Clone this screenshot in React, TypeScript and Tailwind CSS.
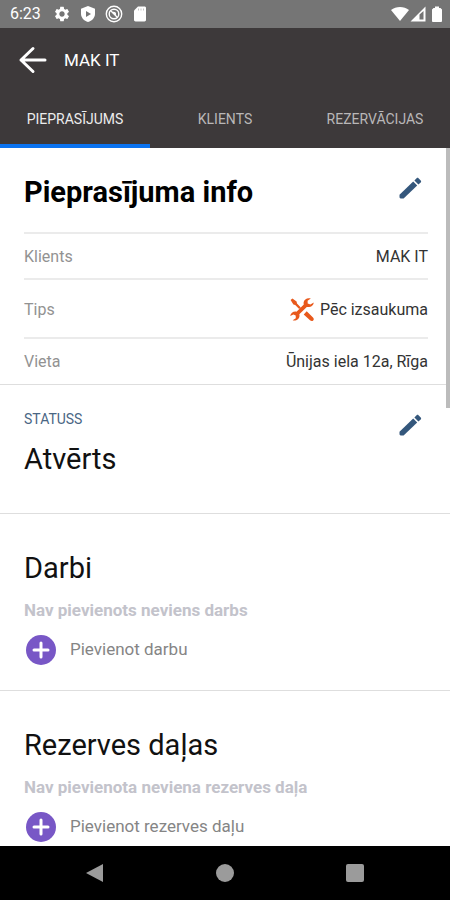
import React from 'react';
import { MdSettings } from 'react-icons/md';

interface InfoRow {
  label: string;
  value: string;
  tall?: boolean;
  icon?: React.ReactNode;
}

interface PartSection {
  title: string;
  empty: string;
  action: string;
}

const ToolsIcon = () => (
  <svg viewBox="0 0 24 24" className="w-6 h-6" fill="#e8591c" aria-hidden="true">
    <path d="M.6 2 2.4.4l4.200 3.200.4 2 3.800 3.900-1.600 1.600-4-4-1.800-.6z" />
    <path d="m13.700 16.400 3-3.100 6.300 6.100c1.100 1.200 1 2.200.2 3-.9 1-2.100.9-3.200-.1z" />
    <path d="M23.700 4.400 20.400 6.600 17.700 5.400 17.600 2.800 20.800.5C17.600-.6 13.900 1.200 13.600 4.500c0 .8 0 1.300.2 1.900L6.500 13.700C3.400 13.100.6 15.200.200 18.100l3.200-1.700 2.300 1.200.100 2.600-3.100 2.100c3.200 1 6.800-1 6.800-4.600 0-.6 0-1-.2-1.500l7.500-7.300c3.500.8 6.700-1.300 6.900-4.500z" />
  </svg>
);

const PencilIcon = () => (
  <svg viewBox="0 0 24 24" className="w-6 h-6" fill="#34577c" aria-hidden="true">
    <path d="M1.500 18.800 15.200 5.600l4 4L5.600 22.600H2.500l-1-1z" />
    <path d="m16.400 4.400 2.200-2.100c.6-.6 1.300-.6 1.900 0l2.200 2.200c.6.6.6 1.300 0 1.900l-2.300 2.100z" />
  </svg>
);

const infoRows: InfoRow[] = [
  { label: 'Klients', value: 'MAK IT' },
  { label: 'Tips', value: 'Pēc izsaukuma', tall: true, icon: <ToolsIcon /> },
  { label: 'Vieta', value: 'Ūnijas iela 12a, Rīga' },
];

const tabs = ['Pieprasījums', 'Klients', 'Rezervācijas'];

const partSections: PartSection[] = [
  { title: 'Darbi', empty: 'Nav pievienots neviens darbs', action: 'Pievienot darbu' },
  { title: 'Rezerves daļas', empty: 'Nav pievienota neviena rezerves daļa', action: 'Pievienot rezerves daļu' },
];

const StatusBar = () => (
  <div className="h-7 shrink-0 bg-[#757575] text-white flex items-center justify-between pl-2.5 pr-2">
    <div className="flex items-center gap-2">
      <span className="text-base mr-1">6:23</span>
      <MdSettings className="w-[18px] h-[18px]" />
      <svg viewBox="0 0 16 16" className="w-[18px] h-4" aria-hidden="true">
        <path fill="#fff" d="M8 0l7 2.700v5c0 4-3 7.200-7 8.300-4-1.100-7-4.300-7-8.300v-5z" />
        <path fill="#757575" d="M6 5l5 3-5 3z" />
      </svg>
      <svg viewBox="0 0 18 18" className="w-[18px] h-[18px]" fill="none" stroke="#fff" strokeWidth="1.400" aria-hidden="true">
        <circle cx="9" cy="9" r="7.700" />
        <circle cx="9" cy="9" r="4.800" />
        <path d="M5.500 5.500l7 7M8 7.500c1.600-.4 2.600.6 2.400 2.200" />
      </svg>
      <svg viewBox="0 0 16 16" className="w-[18px] h-4" aria-hidden="true">
        <path fill="#fff" d="M6 .5h6.500c.8 0 1.500.6 1.500 1.400v12.200c0 .8-.7 1.400-1.500 1.400h-9c-.8 0-1.500-.6-1.500-1.400V4.500z" />
        <path stroke="#c4c4c4" d="M6.500 2.500v2M9 2.500v2M11.500 2.500v2" />
      </svg>
    </div>
    <div className="flex items-center">
      <svg viewBox="0 0 18 16" className="w-[18px] h-4 mr-px" fill="#fff" aria-hidden="true">
        <path d="M0 4C5 0 13 0 18 4L9 15z" />
      </svg>
      <svg viewBox="0 0 16 16" className="w-4 h-4 mr-1.5" aria-hidden="true">
        <path fill="#fff" fillRule="evenodd" d="M15.500.5v15H.5zM9.500 8.500v5h4V5z" />
      </svg>
      <svg viewBox="0 0 10 16" className="w-2.5 h-4" fill="#fff" aria-hidden="true">
        <path d="M3 .5h4V2h1.500L10 3.500V15c0 .5-.5 1-1 1H1c-.5 0-1-.5-1-1V3.500L1.500 2H3z" />
      </svg>
    </div>
  </div>
);

const Header = () => (
  <header className="shrink-0 bg-[#3d393a] text-white">
    <div className="h-16 flex items-center gap-4 px-[18px]">
      <button type="button" aria-label="Atpakaļ">
        <svg
          viewBox="0 0 30 30"
          className="w-[30px] h-[30px]"
          fill="none"
          stroke="#fff"
          strokeWidth="3"
          strokeLinecap="round"
          strokeLinejoin="round"
        >
          <path d="M27 15H3M15 3.500 3 15l12 11.500" />
        </svg>
      </button>
      <h1 className="text-[17px] pt-px">MAK IT</h1>
    </div>
    <nav className="grid grid-cols-3">
      {tabs.map((tab, index) => (
        <button
          key={tab}
          type="button"
          className={
            index === 0
              ? 'h-14 pt-px text-sm uppercase text-[#ececec] border-b-4 border-[#0b73f0]'
              : 'h-14 pt-px text-sm uppercase text-[#b9b7b8] border-b-4 border-transparent'
          }
        >
          {tab}
        </button>
      ))}
    </nav>
  </header>
);

const AddSection: React.FC<PartSection> = ({ title, empty, action }) => (
  <section className="px-6 pt-9 pb-6 border-b border-[#dedede]">
    <h2 className="text-[29px] leading-9 text-[#111]">{title}</h2>
    <p className="mt-3 text-[17px] leading-6 font-bold text-[#c3c3cb]">{empty}</p>
    <button type="button" className="mt-3 h-8 flex items-center gap-3 text-[17px] text-[#858585]">
      <svg viewBox="0 0 34 32" className="w-[34px] h-8" aria-hidden="true">
        <circle cx="17" cy="16" r="15" fill="#7857c6" />
        <path d="M17 9v14M10 16h14" stroke="#fff" strokeWidth="3" strokeLinecap="round" />
      </svg>
      {action}
    </button>
  </section>
);

export default function App() {
  return (
    <div className="h-screen flex flex-col overflow-hidden bg-white text-black font-['Roboto',sans-serif]">
      <StatusBar />
      <Header />
      <main className="relative flex-1 min-h-0 overflow-hidden">
        <section className="pt-6 pb-px border-b border-[#dedede]">
          <div className="pl-6 pr-[22px] flex justify-between">
            <h2 className="text-[29px] leading-10 font-bold">Pieprasījuma info</h2>
            <button type="button" aria-label="Labot info" className="self-start pt-1 pr-1.5">
              <PencilIcon />
            </button>
          </div>
          <dl className="ml-6 mr-[22px] mt-5">
            {infoRows.map((row) => (
              <div
                key={row.label}
                className={
                  row.tall
                    ? 'h-[59px] pt-0.5 flex items-center justify-between border-t-2 border-[#ebebeb]'
                    : 'h-[46px] pt-0.5 flex items-center justify-between border-t-2 border-[#ebebeb]'
                }
              >
                <dt className="text-base text-[#929292]">{row.label}</dt>
                <dd className="flex items-center gap-1.5 text-base text-[#333]">
                  {row.icon}
                  {row.value}
                </dd>
              </div>
            ))}
          </dl>
        </section>

        <section className="pl-6 pr-[22px] pt-6 pb-9 flex justify-between border-b border-[#dedede]">
          <div>
            <h3 className="text-sm text-[#4a6684] uppercase">Statuss</h3>
            <p className="mt-3 text-[29px] leading-9 text-[#111]">Atvērts</p>
          </div>
          <button type="button" aria-label="Labot statusu" className="self-start pt-1 pr-1.5">
            <PencilIcon />
          </button>
        </section>

        {partSections.map((section) => (
          <AddSection key={section.title} {...section} />
        ))}

        <div className="absolute top-0 right-0 w-1 h-[260px] bg-[#bcbcbc]" />
      </main>

      <nav className="h-[54px] shrink-0 bg-black grid grid-cols-3 place-items-center px-[30px]">
        <button type="button" aria-label="Back">
          <svg viewBox="0 0 20 20" className="w-5 h-5" fill="#9b9b9b">
            <path d="M18 1v18L1 10z" />
          </svg>
        </button>
        <button type="button" aria-label="Home" className="w-[18px] h-[18px] rounded-full bg-[#9b9b9b]" />
        <button type="button" aria-label="Recents" className="w-[18px] h-[18px] rounded-xs bg-[#9b9b9b]" />
      </nav>
    </div>
  );
}
